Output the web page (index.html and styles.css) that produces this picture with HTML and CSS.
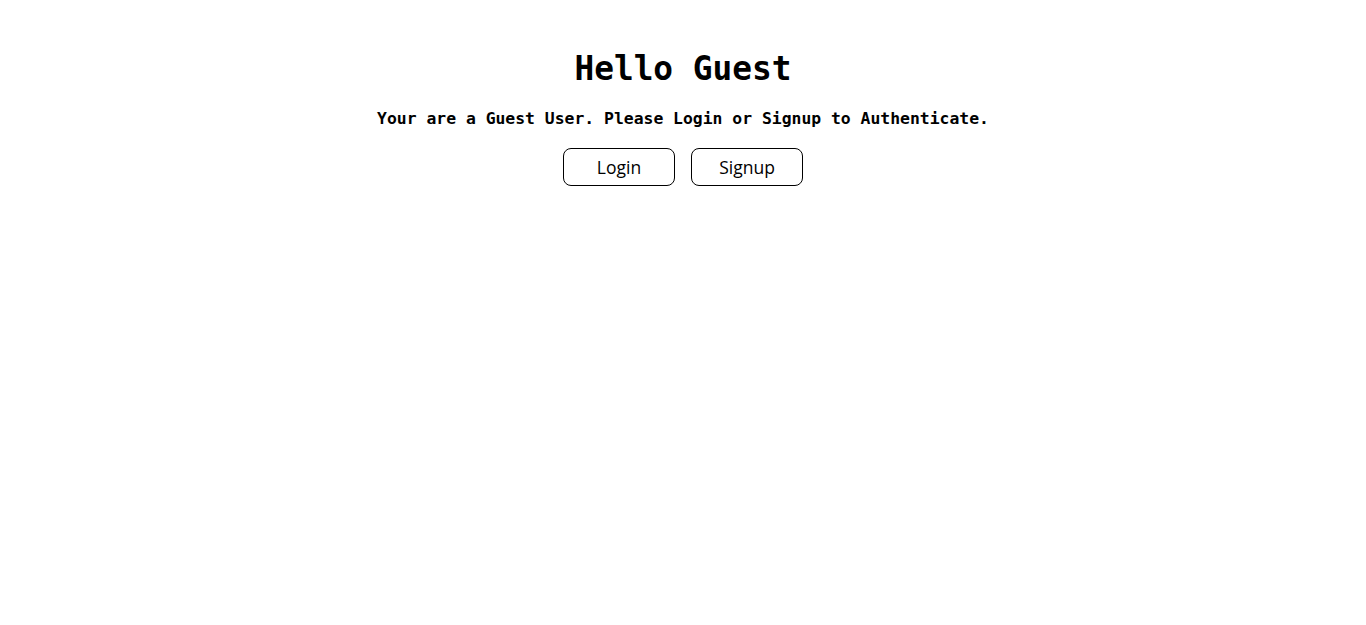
FILE: index.html
```html
<!DOCTYPE html>
<html>
<head>
<meta charset="utf-8">
<title>Hello Guest</title>
<link rel="stylesheet" href="styles.css">
</head>
<body>
<main class="guest">
  <h1 class="guest-title">Hello Guest</h1>
  <p class="guest-text">Your are a Guest User. Please Login or Signup to Authenticate.</p>
  <div class="guest-actions">
    <button class="btn" type="button">Login</button>
    <button class="btn" type="button">Signup</button>
  </div>
</main>
</body>
</html>
```
FILE: styles.css
```css
html, body {
  margin: 0;
  padding: 0;
  background: #fff;
}
.guest {
  display: flex;
  flex-direction: column;
  align-items: center;
  padding-top: 47px;
  color: #000;
}
.guest-title {
  margin: 0;
  font-family: "DejaVu Sans Mono", "Liberation Mono", monospace;
  font-weight: bold;
  font-size: 32.8px;
  line-height: 44px;
}
.guest-text {
  margin: 17px 0 0;
  font-family: "DejaVu Sans Mono", "Liberation Mono", monospace;
  font-weight: bold;
  font-size: 16.4px;
  line-height: 22px;
}
.guest-actions {
  display: flex;
  gap: 16px;
  margin-top: 18px;
}
.btn {
  width: 112px;
  height: 38px;
  border: 1px solid #000;
  border-radius: 8px;
  background: #fff;
  color: #000;
  font-family: "Open Sans", "Noto Sans", sans-serif;
  font-size: 17.5px;
  font-weight: 500;
  padding: 0;
}
```
